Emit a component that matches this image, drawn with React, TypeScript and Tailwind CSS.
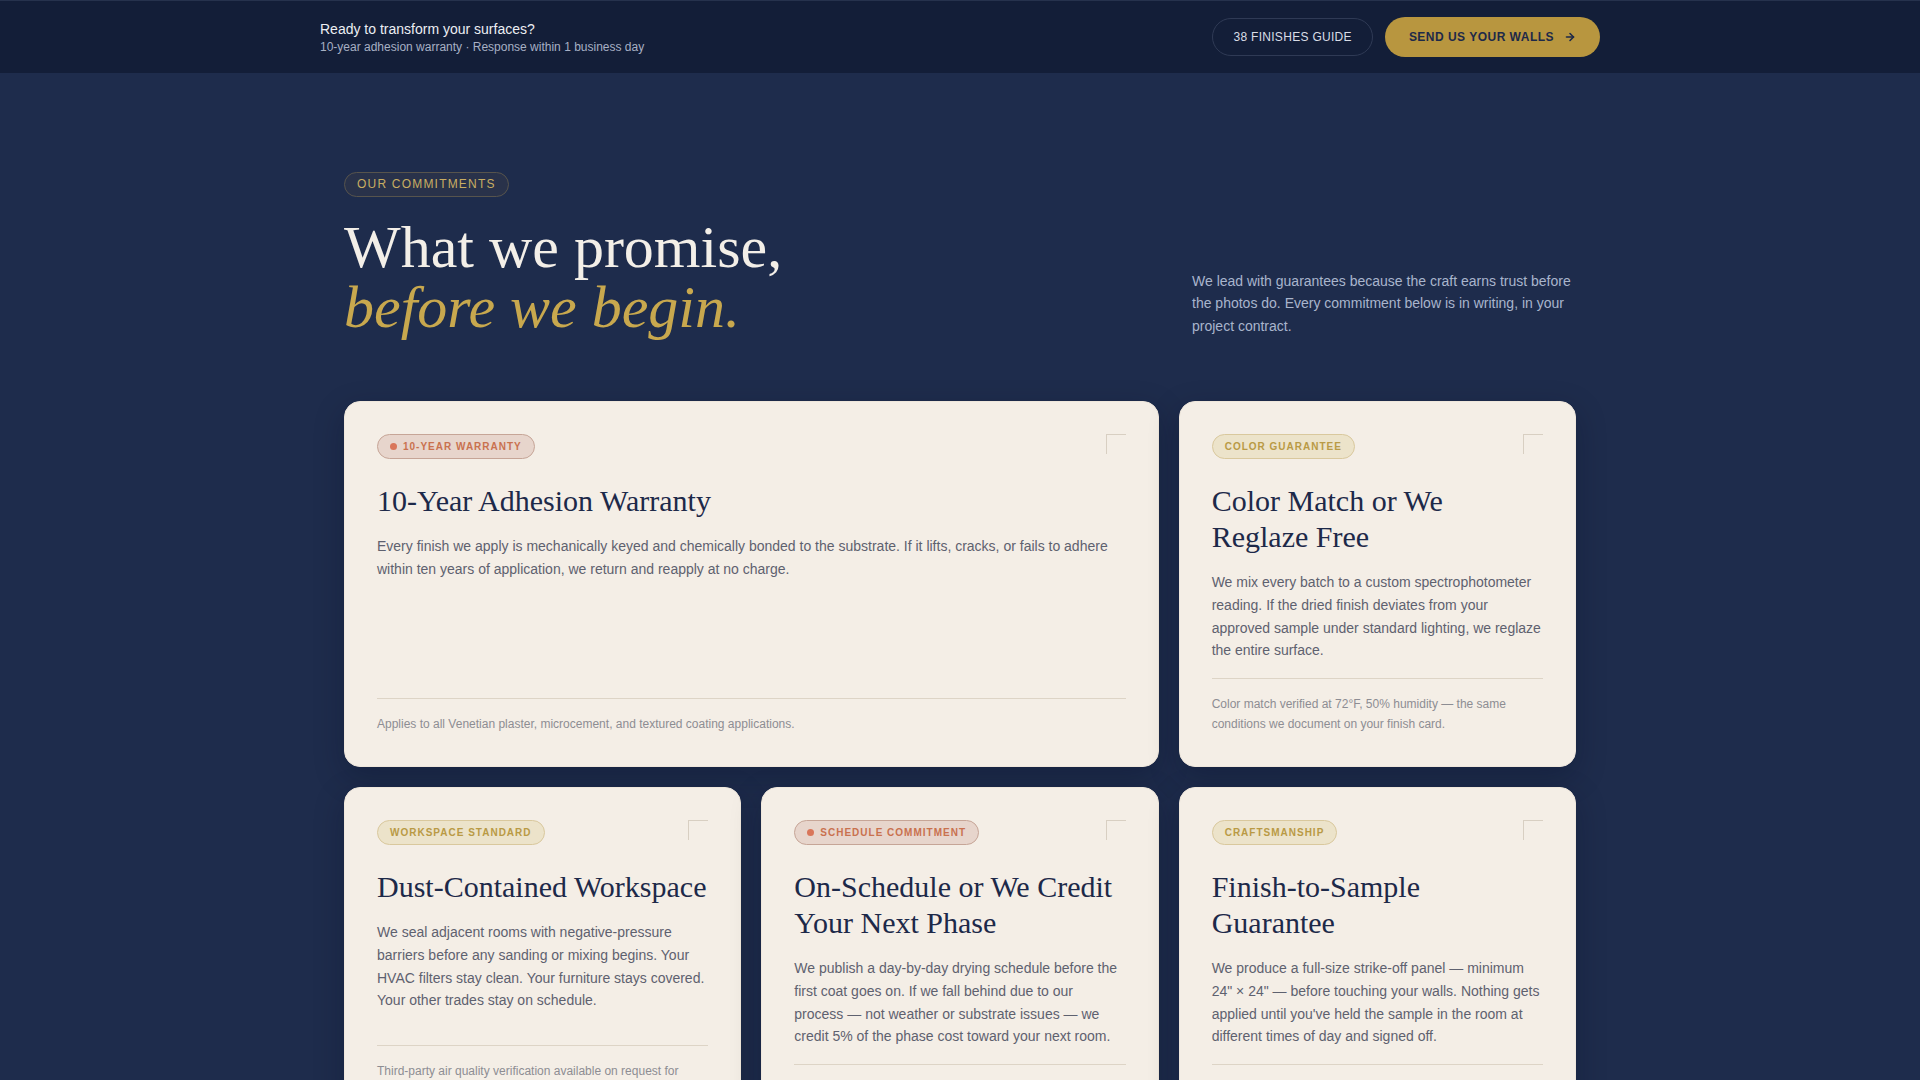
import React from "react";
import { ArrowRight } from "lucide-react";

type Tone = "terra" | "gold";

type Commitment = {
  tag: string;
  tone: Tone;
  title: string;
  body: string;
  note: string;
  wide?: boolean;
};

const commitments: Commitment[] = [
  {
    tag: "10-Year Warranty",
    tone: "terra",
    title: "10-Year Adhesion Warranty",
    body: "Every finish we apply is mechanically keyed and chemically bonded to the substrate. If it lifts, cracks, or fails to adhere within ten years of application, we return and reapply at no charge.",
    note: "Applies to all Venetian plaster, microcement, and textured coating applications.",
    wide: true,
  },
  {
    tag: "Color Guarantee",
    tone: "gold",
    title: "Color Match or We Reglaze Free",
    body: "We mix every batch to a custom spectrophotometer reading. If the dried finish deviates from your approved sample under standard lighting, we reglaze the entire surface.",
    note: "Color match verified at 72°F, 50% humidity — the same conditions we document on your finish card.",
  },
  {
    tag: "Workspace Standard",
    tone: "gold",
    title: "Dust-Contained Workspace",
    body: "We seal adjacent rooms with negative-pressure barriers before any sanding or mixing begins. Your HVAC filters stay clean. Your furniture stays covered. Your other trades stay on schedule.",
    note: "Third-party air quality verification available on request for commercial projects.",
  },
  {
    tag: "Schedule Commitment",
    tone: "terra",
    title: "On-Schedule or We Credit Your Next Phase",
    body: "We publish a day-by-day drying schedule before the first coat goes on. If we fall behind due to our process — not weather or substrate issues — we credit 5% of the phase cost toward your next room.",
    note: "Credit is applied automatically at phase close-out.",
  },
  {
    tag: "Craftsmanship",
    tone: "gold",
    title: "Finish-to-Sample Guarantee",
    body: "We produce a full-size strike-off panel — minimum 24\" × 24\" — before touching your walls. Nothing gets applied until you've held the sample in the room at different times of day and signed off.",
    note: "Strike-off panels are yours to keep.",
  },
];

function Tag({ label, tone }: { label: string; tone: Tone }) {
  if (tone === "terra") {
    return (
      <span className="inline-flex items-center gap-[6px] rounded-full border border-[#c6a597] bg-[#e7d5cc] px-3 py-[4px] text-[10px] font-bold uppercase leading-[15px] tracking-[0.1em] text-[#c9714f]">
        <span className="h-[7px] w-[7px] rounded-full bg-[#d9765a]" />
        {label}
      </span>
    );
  }
  return (
    <span className="inline-flex items-center rounded-full border border-[#d9c89d] bg-[#ece3ca] px-3 py-[4px] text-[10px] font-bold uppercase leading-[15px] tracking-[0.1em] text-[#b99a45]">
      {label}
    </span>
  );
}

function CommitmentCard({ item }: { item: Commitment }) {
  return (
    <div
      className={`flex flex-col rounded-2xl border border-[#efe7dc] bg-[#f4eee6] p-8 shadow-[0_10px_30px_rgba(5,12,30,0.25)] ${
        item.wide ? "col-span-2" : ""
      }`}
    >
      <div className="flex items-start justify-between">
        <Tag label={item.tag} tone={item.tone} />
        <span className="h-5 w-5 border-l border-t border-[#d8cfc2]" />
      </div>
      <h3 className="mt-6 font-['Liberation_Serif',serif] text-[30px] font-normal leading-9 text-[#1d2949]">
        {item.title}
      </h3>
      <p className="mt-4 text-sm leading-[1.625] text-[#5e616f]">{item.body}</p>
      <div className="mt-auto pt-4">
        <div className="border-t border-[#ddd4c6] pt-4 text-xs leading-[1.625] text-[#8d8d93]">
          {item.note}
        </div>
      </div>
    </div>
  );
}

export default function App() {
  return (
    <div className="min-h-screen bg-[#1e2c4c] font-['Liberation_Sans',Arial,sans-serif]">
      {/* call-to-action bar */}
      <div className="border-t border-[#26324d] bg-[#131e38]">
        <div className="mx-auto flex h-[72px] max-w-7xl items-center justify-between">
          <div>
            <div className="text-sm leading-5 text-[#eceef3]">Ready to transform your surfaces?</div>
            <div className="text-xs leading-4 text-[#a7b0c4]">
              10-year adhesion warranty · Response within 1 business day
            </div>
          </div>
          <div className="flex items-center gap-3">
            <button className="h-[38px] rounded-full border border-[#2f3a55] px-5 text-xs tracking-wide text-[#d9dde6]">
              38 FINISHES GUIDE
            </button>
            <button className="flex h-10 items-center gap-2.5 rounded-full bg-[#b8963f] px-6 text-xs font-bold tracking-[0.04em] text-[#1d2949]">
              SEND US YOUR WALLS
              <ArrowRight size={12} strokeWidth={3.2} />
            </button>
          </div>
        </div>
      </div>

      {/* commitments */}
      <section className="mx-auto max-w-7xl px-6 pt-[98px] pb-24">
        <div className="flex items-end justify-between">
          <div>
            <span className="inline-block rounded-full border border-[#57544d] bg-[#29324a] px-3 py-1 text-xs uppercase leading-[15px] tracking-widest text-[#c8ad62]">
              Our Commitments
            </span>
            <h2 className="mt-5 font-['Liberation_Serif',serif] text-[60px] font-normal leading-none text-[#f3efe8]">
              What we promise,
              <br />
              <em className="text-[#c8a84e]">before we begin.</em>
            </h2>
          </div>
          <p className="max-w-sm text-sm leading-[1.6] text-[#a9b5cc]">
            We lead with guarantees because the craft earns trust before the photos do. Every commitment below is in
            writing, in your project contract.
          </p>
        </div>

        <div className="mt-16 grid grid-cols-3 gap-5">
          {commitments.map((c) => (
            <CommitmentCard key={c.title} item={c} />
          ))}
        </div>
      </section>
    </div>
  );
}
